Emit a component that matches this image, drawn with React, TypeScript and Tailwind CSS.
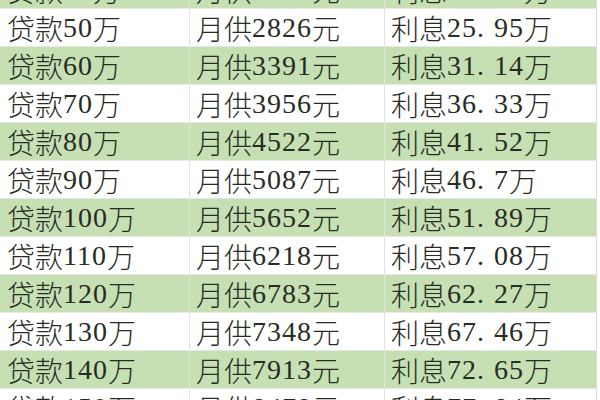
const rows = [
  { loan: "40", pay: "2261", interest: "20.76" },
  { loan: "50", pay: "2826", interest: "25.95" },
  { loan: "60", pay: "3391", interest: "31.14" },
  { loan: "70", pay: "3956", interest: "36.33" },
  { loan: "80", pay: "4522", interest: "41.52" },
  { loan: "90", pay: "5087", interest: "46.7" },
  { loan: "100", pay: "5652", interest: "51.89" },
  { loan: "110", pay: "6218", interest: "57.08" },
  { loan: "120", pay: "6783", interest: "62.27" },
  { loan: "130", pay: "7348", interest: "67.46" },
  { loan: "140", pay: "7913", interest: "72.65" },
  { loan: "150", pay: "8478", interest: "77.84" },
];

function Num({ value }: { value: string }) {
  // the period in the sheet font is a wide half-width cell
  const [a, b] = value.split(".");
  return (
    <span className="[font-family:'Liberation_Serif',serif] font-normal text-[28px] tracking-[1px]">
      {a}
      {b !== undefined && (
        <>
          <span className="inline-block w-[17px]">.</span>
          {b}
        </>
      )}
    </span>
  );
}

export default function App() {
  return (
    <div className="w-[600px] h-[400px] overflow-hidden bg-white text-[28px] text-[#272c25] [font-family:'Noto_Sans_CJK_SC',sans-serif]">
      <div className="-mt-[29px] w-[597px] border-r border-[#d9d9d9]">
        {rows.map((r, i) => (
          <div
            key={r.loan}
            className={`flex h-[38px] items-center border-b border-[#e4ebe0] ${
              i % 2 === 0 ? "bg-[#c6e0b4]" : "bg-white"
            }`}
          >
            <div className="w-[190px] h-full flex items-center pl-[7px] border-r border-[#e2e2e2] font-light">
              贷款<Num value={r.loan} />万
            </div>
            <div className="w-[195px] h-full flex items-center pl-[6px] border-r border-[#e2e2e2] font-light">
              月供<Num value={r.pay} />元
            </div>
            <div className="flex-1 h-full flex items-center pl-[6px] font-light">
              利息<Num value={r.interest} />万
            </div>
          </div>
        ))}
      </div>
    </div>
  );
}
